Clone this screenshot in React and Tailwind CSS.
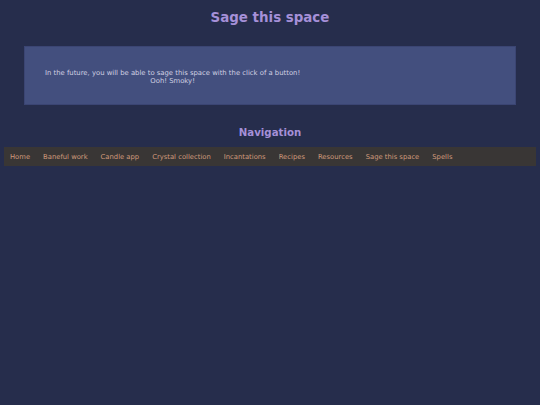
export default function App() {
  const links = ["Home", "Baneful work", "Candle app", "Crystal collection", "Incantations", "Recipes", "Resources", "Sage this space", "Spells"];
  return (
    <div className="min-h-[405px] w-full bg-[#262d4c] pt-[9px]" style={{ fontFamily: '"DejaVu Sans", Verdana, sans-serif' }}>
      <h1 className="text-center text-[13.4px] font-bold leading-[18px] text-[#a590d8]">Sage this space</h1>
      <div className="mx-[24px] mt-[19px] h-[59px] border border-[#3b4573] bg-[#434f7e] pl-[20px] pt-[19px]">
        <div className="inline-block text-center text-[6.85px] leading-[8px] text-[#d0d0e2]">
          In the future, you will be able to sage this space with the click of a button!
          <br />
          Ooh! Smoky!
        </div>
      </div>
      <h2 className="mt-[20px] text-center text-[10.2px] font-bold leading-[15px] text-[#a590d8]">Navigation</h2>
      <nav className="mx-[4px] mt-[7px] flex h-[19px] items-center bg-[#393635] pl-[6px]">
        {links.map((l) => (
          <a key={l} className="mr-[13px] text-[6.8px] leading-[10px] text-[#d09a7c]">{l}</a>
        ))}
      </nav>
    </div>
  );
}
